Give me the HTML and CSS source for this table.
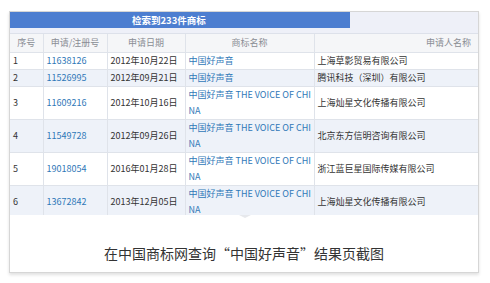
FILE: index.html
```html
<!DOCTYPE html>
<html lang="zh">
<head>
<meta charset="utf-8">
<link rel="stylesheet" href="styles.css">
</head>
<body>
<div class="frame">
  <div class="table-clip">
    <table class="tm">
      <colgroup>
        <col class="c1"><col class="c2"><col class="c3"><col class="c4"><col class="c5">
      </colgroup>
      <tr class="title-row">
        <td colspan="5"><div class="title-bar">检索到233件商标</div></td>
      </tr>
      <tr class="head">
        <th>序号</th><th>申请/注册号</th><th>申请日期</th><th>商标名称</th><th class="right">申请人名称</th>
      </tr>
      <tr>
        <td>1</td><td class="link">11638126</td><td>2012年10月22日</td><td class="link">中国好声音</td><td>上海草影贸易有限公司</td>
      </tr>
      <tr class="alt">
        <td>2</td><td class="link">11526995</td><td>2012年09月21日</td><td class="link">中国好声音</td><td>腾讯科技（深圳）有限公司</td>
      </tr>
      <tr>
        <td>3</td><td class="link">11609216</td><td>2012年10月16日</td><td class="link">中国好声音 THE VOICE OF CHI<br>NA</td><td>上海灿星文化传播有限公司</td>
      </tr>
      <tr class="alt">
        <td>4</td><td class="link">11549728</td><td>2012年09月26日</td><td class="link">中国好声音 THE VOICE OF CHI<br>NA</td><td>北京东方信明咨询有限公司</td>
      </tr>
      <tr>
        <td>5</td><td class="link">19018054</td><td>2016年01月28日</td><td class="link">中国好声音 THE VOICE OF CHI<br>NA</td><td>浙江蓝巨星国际传媒有限公司</td>
      </tr>
      <tr class="alt">
        <td>6</td><td class="link">13672842</td><td>2013年12月05日</td><td class="link">中国好声音 THE VOICE OF CHI<br>NA</td><td>上海灿星文化传播有限公司</td>
      </tr>
    </table>
  </div>
  <div class="caption">
    <span class="caret"></span>
    在中国商标网查询“中国好声音”结果页截图
  </div>
</div>
</body>
</html>
```
FILE: styles.css
```css
* { box-sizing: border-box; }
html, body { margin: 0; padding: 0; background: #ffffff; }
body {
  width: 490px;
  height: 283px;
  overflow: hidden;
  font-family: "Noto Sans CJK SC", "Liberation Sans", sans-serif;
}
.frame {
  margin: 11px 0 0 9px;
  width: 470px;
  border: 1px solid #d6d6d6;
  box-shadow: 0 2px 3px rgba(0, 0, 0, 0.12);
  background: #ffffff;
}
.table-clip {
  height: 203px;
  overflow: hidden;
}
.tm {
  width: 468px;
  border-collapse: collapse;
  table-layout: fixed;
  font-size: 9px;
  color: #333333;
}
.c1 { width: 33px; }
.c2 { width: 64px; }
.c3 { width: 78px; }
.c4 { width: 129px; }
.c5 { width: 164px; }
.tm td, .tm th {
  padding: 0 3px;
  line-height: 16px;
  border-bottom: 1px solid #dfe3ea;
  border-left: 1px solid #dfe3ea;
  vertical-align: middle;
  white-space: nowrap;
  overflow: hidden;
  text-align: left;
}
.tm td:first-child, .tm th:first-child { border-left: none; }
.title-row td {
  padding: 0;
  height: 21px;
  vertical-align: top;
  background: #eef0f8;
  border-bottom: 1px solid #dde1ea;
}
.title-bar {
  width: 340px;
  height: 16px;
  background: #4d7ed0;
  color: #ffffff;
  font-weight: bold;
  font-size: 9.5px;
  line-height: 16px;
  padding-left: 122px;
}
.head th {
  height: 19px;
  background: #f5f6f8;
  color: #8a8d94;
  font-weight: normal;
  text-align: center;
}
.head th.right { text-align: right; padding-right: 7px; }
.tm tr.alt td { background: #eef2f9; }
.tm td.link { color: #2f78b8; }
.caption {
  position: relative;
  height: 57px;
  padding-top: 28px;
  text-align: center;
  font-size: 14px;
  line-height: 20px;
  color: #333333;
  background: #ffffff;
}
.caret {
  position: absolute;
  left: 229px;
  top: 0;
  width: 0;
  height: 0;
  border-left: 6px solid transparent;
  border-right: 6px solid transparent;
  border-top: 3px solid #e6e8ec;
}
```
